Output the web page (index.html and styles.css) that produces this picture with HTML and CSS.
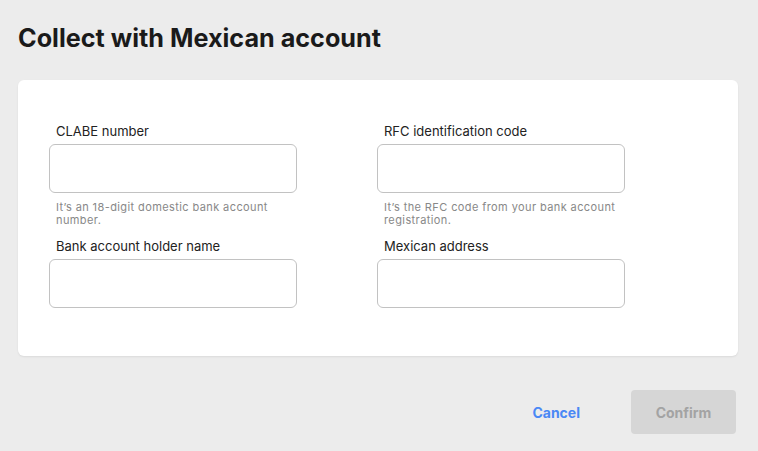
FILE: index.html
```html
<!DOCTYPE html>
<html lang="en">
<head>
    <meta charset="UTF-8">
    <meta name="viewport" content="width=device-width, initial-scale=1.0">
    <title>Collect with Mexican account</title>
    <link rel="stylesheet" href="styles.css">
</head>
<body>
    <div class="page">
        <h1 class="title">Collect with Mexican account</h1>
        <div class="card">
            <div class="fields">
                <div class="field">
                    <label class="label" for="clabe">CLABE number</label>
                    <input class="input" id="clabe" type="text">
                    <div class="help">It’s an 18-digit domestic bank account number.</div>
                </div>
                <div class="field">
                    <label class="label" for="rfc">RFC identification code</label>
                    <input class="input" id="rfc" type="text">
                    <div class="help">It’s the RFC code from your bank account registration.</div>
                </div>
                <div class="field">
                    <label class="label" for="holder">Bank account holder name</label>
                    <input class="input" id="holder" type="text">
                </div>
                <div class="field">
                    <label class="label" for="address">Mexican address</label>
                    <input class="input" id="address" type="text">
                </div>
            </div>
        </div>
        <div class="actions">
            <button class="btn btn-link">Cancel</button>
            <button class="btn btn-primary" disabled>Confirm</button>
        </div>
    </div>
</body>
</html>
```

FILE: styles.css
```css
body {
    margin: 0;
    background-color: #ececec;
    color: #1b1b1b;
    font-family: Inter, 'Noto Sans', sans-serif;
}
.page {
    padding: 0 20px 0 18px;
}
.title {
    margin: 0;
    padding-top: 23px;
    height: 80px;
    box-sizing: border-box;
    font-size: 25.2px;
    font-weight: 700;
    line-height: 30px;
    color: #1a1a1a;
}
.card {
    background-color: #fff;
    border-radius: 6px;
    box-shadow: 0 1px 2px rgba(0, 0, 0, 0.08);
    padding: 43px 31px 48px;
}
.fields {
    display: grid;
    grid-template-columns: 248px 248px;
    column-gap: 80px;
    row-gap: 11px;
}
.label {
    display: block;
    padding: 0 7px;
    font-size: 13px;
    line-height: 16px;
    margin-bottom: 5px;
    color: #222;
}
.input {
    display: block;
    width: 248px;
    height: 49px;
    box-sizing: border-box;
    border: 1px solid #c2c2c2;
    border-radius: 6px;
    background: #fff;
    outline: none;
    font-family: inherit;
    font-size: 14px;
    padding: 0 12px;
}
.help {
    margin: 8px -4px 0 0;
    padding-left: 7px;
    font-size: 11px;
    line-height: 13px;
    letter-spacing: 0.4px;
    color: #888;
}
.actions {
    display: flex;
    justify-content: flex-end;
    align-items: center;
    gap: 27px;
    margin-top: 34px;
    margin-right: 2px;
}
.btn {
    font-family: inherit;
    font-size: 14px;
    font-weight: 700;
    border: none;
    height: 44px;
    border-radius: 4px;
    cursor: pointer;
}
.btn-link {
    background: transparent;
    color: #4a88f5;
    padding: 0 24px;
}
.btn-primary {
    width: 105px;
    background-color: #d6d6d6;
    color: #a3a3a3;
    cursor: default;
}
```
